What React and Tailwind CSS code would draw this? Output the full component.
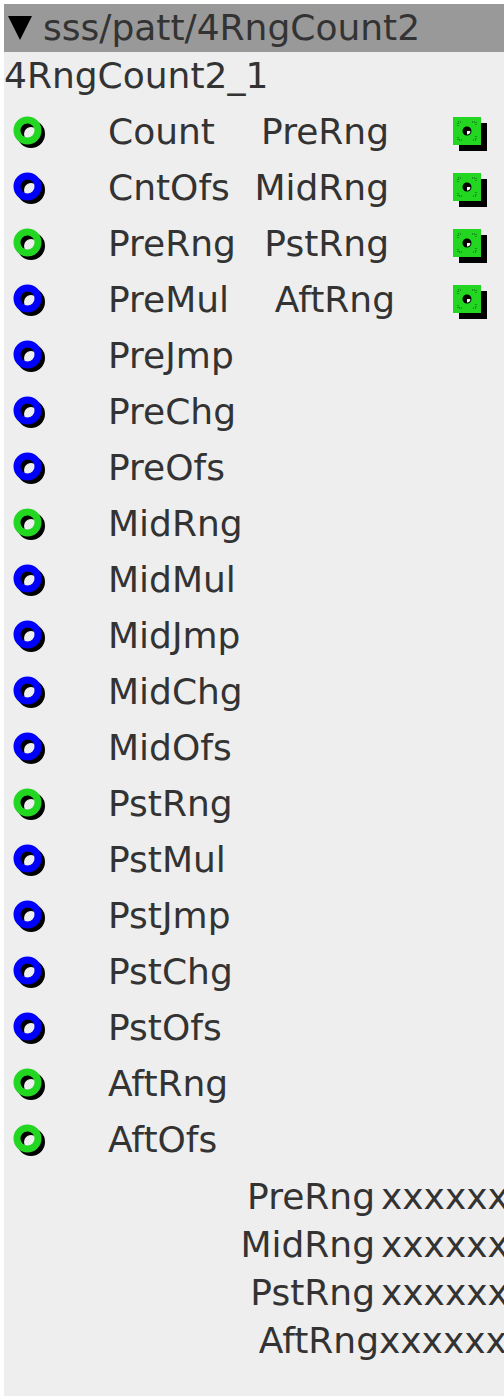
const inputs = [
  { name: "Count", kind: "green" },
  { name: "CntOfs", kind: "blue" },
  { name: "PreRng", kind: "green" },
  { name: "PreMul", kind: "blue" },
  { name: "PreJmp", kind: "blue" },
  { name: "PreChg", kind: "blue" },
  { name: "PreOfs", kind: "blue" },
  { name: "MidRng", kind: "green" },
  { name: "MidMul", kind: "blue" },
  { name: "MidJmp", kind: "blue" },
  { name: "MidChg", kind: "blue" },
  { name: "MidOfs", kind: "blue" },
  { name: "PstRng", kind: "green" },
  { name: "PstMul", kind: "blue" },
  { name: "PstJmp", kind: "blue" },
  { name: "PstChg", kind: "blue" },
  { name: "PstOfs", kind: "blue" },
  { name: "AftRng", kind: "green" },
  { name: "AftOfs", kind: "green" },
];

// outputs sit on the first four rows
const outputs = [
  { name: "PreRng", label: "w-[139px]", icon: "pl-[64px]" },
  { name: "MidRng", label: "w-[139px]", icon: "pl-[64px]" },
  { name: "PstRng", label: "w-[139px]", icon: "pl-[64px]" },
  { name: "AftRng", label: "w-[145px]", icon: "pl-[58px]" },
];

const values = [
  { name: "PreRng", label: "w-[371px]", value: "pl-[6px]" },
  { name: "MidRng", label: "w-[371px]", value: "pl-[6px]" },
  { name: "PstRng", label: "w-[371px]", value: "pl-[6px]" },
  { name: "AftRng", label: "w-[375px]", value: "pl-0" },
];

function InPort({ kind }) {
  const color = kind === "green" ? "#22d622" : "#0000ff";
  return (
    <svg width="36" height="36" viewBox="0 0 36 36" className="block">
      <circle cx="18" cy="18" r="10.5" fill="none" stroke="#000" strokeWidth="7" />
      <circle cx="14.5" cy="14.5" r="10.5" fill="none" stroke={color} strokeWidth="7" />
    </svg>
  );
}

function OutPort() {
  return (
    <svg width="36" height="36" viewBox="0 0 36 36" className="block">
      <rect x="6" y="6" width="28" height="28" fill="#000" />
      <rect x="0" y="0" width="28" height="28" fill="#22d622" />
      <path
        d="M5 9V5h4M19 5h4v4M23 19v4h-4M9 23H5v-4"
        fill="none"
        stroke="#0a5a0a"
        strokeWidth="1"
        strokeDasharray="1 1"
      />
      <circle cx="14" cy="14" r="4.5" fill="#000" />
      <path d="M14 14h3.4a3.4 3.4 0 0 1-3.4 3.4z" fill="#fff" />
    </svg>
  );
}

export default function App() {
  return (
    <div
      className="h-[1400px] w-[504px] overflow-hidden bg-white pl-[4px] pt-[4px] text-[36px] text-[#333]"
      style={{ fontFamily: '"DejaVu Sans", "Liberation Sans", sans-serif' }}
    >
      <div className="w-[620px] bg-[#eeeeee] pb-[31px]">
        <div className="flex h-[48px] items-center bg-[#999999]">
          <svg width="24" height="24" viewBox="0 0 24 24" className="ml-[4px] block">
            <polygon points="0,0 24,0 12,24" fill="#000" />
          </svg>
          <span className="ml-[11px] leading-[48px]">sss/patt/4RngCount2</span>
        </div>

        <div className="mb-[4px] h-[48px] leading-[48px]">4RngCount2_1</div>

        {inputs.map((item, i) => {
          const out = outputs[i];
          return (
            <div key={item.name + i} className="flex h-[56px] items-start">
              <div className="w-[104px] shrink-0 pl-[9px] pt-[12px]">
                <InPort kind={item.kind} />
              </div>
              <span className="w-[142px] shrink-0 whitespace-nowrap leading-[56px]">{item.name}</span>
              {out && (
                <>
                  <span className={`${out.label} shrink-0 whitespace-nowrap text-right leading-[56px]`}>
                    {out.name}
                  </span>
                  <div className={`${out.icon} pt-[13px]`}>
                    <OutPort />
                  </div>
                </>
              )}
            </div>
          );
        })}

        <div className="mt-[5px]">
          {values.map((v) => (
            <div key={v.name} className="flex h-[48px] leading-[48px] whitespace-nowrap">
              <span className={`${v.label} shrink-0 text-right`}>{v.name}</span>
              <span className={v.value}>xxxxxxxxxx</span>
            </div>
          ))}
        </div>
      </div>
    </div>
  );
}
